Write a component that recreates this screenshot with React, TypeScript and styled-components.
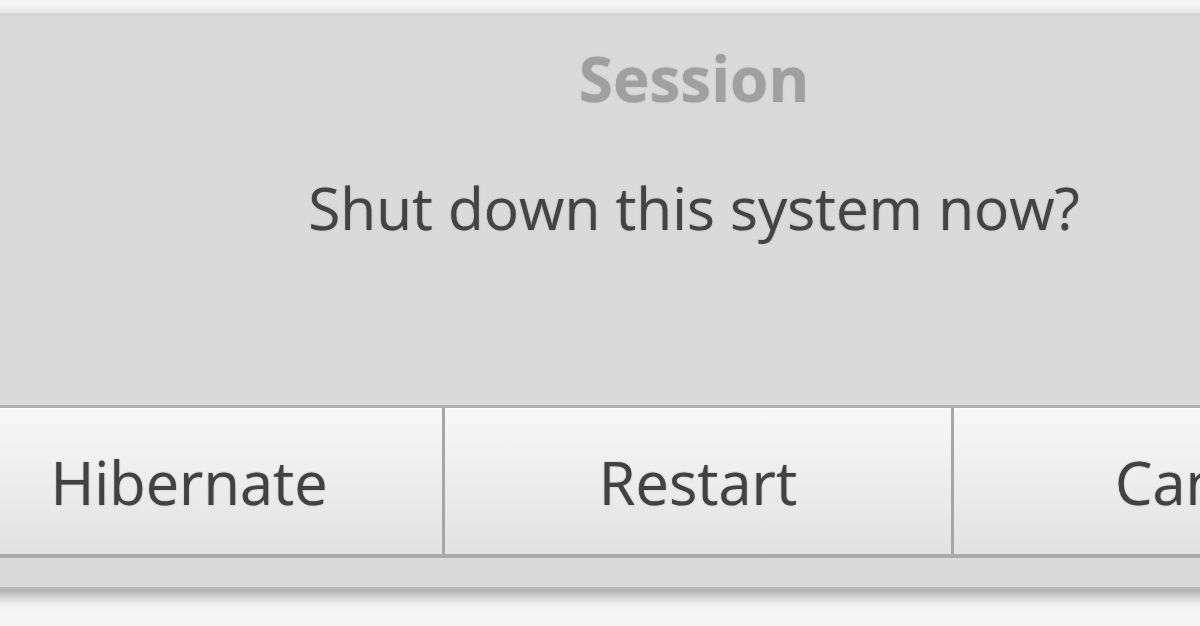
import React from "react";
import styled, { createGlobalStyle } from "styled-components";

const Global = createGlobalStyle`
  html, body {
    margin: 0;
    padding: 0;
    background: #f4f4f4;
    overflow: hidden;
  }
  body {
    font-family: "Open Sans", "Noto Sans", "DejaVu Sans", sans-serif;
  }
`;

const Page = styled.div`
  width: 1200px;
  height: 626px;
  overflow: hidden;
  padding-top: 13px;
  box-sizing: border-box;
  background: #f5f5f5;
`;

const Dialog = styled.div`
  margin-left: -64px;
  width: 1524px;
  background: #dadada;
  border-top: 3px solid #d3d3d3;
  border-bottom: 3px solid #b9b9b9;
  box-shadow: 0 -3px 8px rgba(0, 0, 0, 0.08), 0 9px 12px -3px rgba(0, 0, 0, 0.32);
  display: flex;
  flex-direction: column;
  align-items: stretch;
`;

const Title = styled.div`
  padding: 22px 8px 0 0;
  text-align: center;
  font-size: 62px;
  line-height: 80px;
  font-weight: 700;
  color: #a0a0a0;
  text-shadow: 0 0 2px rgba(150, 150, 150, 0.5);
`;

const Message = styled.div`
  margin-top: 49px;
  padding-right: 8px;
  text-align: center;
  font-size: 58.5px;
  line-height: 80px;
  color: #444;
  text-shadow: 0 0 1.5px rgba(40, 40, 40, 0.45);
`;

const ButtonRow = styled.div`
  margin-top: 158px;
  display: flex;
  border-top: 3px solid #b2b2b2;
  border-bottom: 4px solid #ababab;
`;

const Button = styled.button<{ $first?: boolean }>`
  flex: 1 1 0;
  margin: 0;
  height: 146px;
  border: none;
  border-left: ${(p) => (p.$first ? "none" : "3px solid #a6a6a6")};
  background: linear-gradient(#f7f7f7 0%, #efefef 40%, #e2e2e2 100%);
  box-shadow: inset 0 2px 0 #fbfbfb;
  font-family: "Open Sans", "Noto Sans", "DejaVu Sans", sans-serif;
  font-size: 59.5px;
  line-height: 80px;
  color: #424242;
  text-shadow: 0 0 1.5px rgba(40, 40, 40, 0.45);
  padding: 2px 0 0;
  cursor: pointer;
`;

const Footer = styled.div`
  height: 29px;
`;

export default function App() {
  return (
    <>
      <Global />
      <Page>
        <Dialog>
          <Title>Session</Title>
          <Message>Shut down this system now?</Message>
          <ButtonRow>
            <Button $first>Hibernate</Button>
            <Button>Restart</Button>
            <Button>Cancel</Button>
          </ButtonRow>
          <Footer />
        </Dialog>
      </Page>
    </>
  );
}
